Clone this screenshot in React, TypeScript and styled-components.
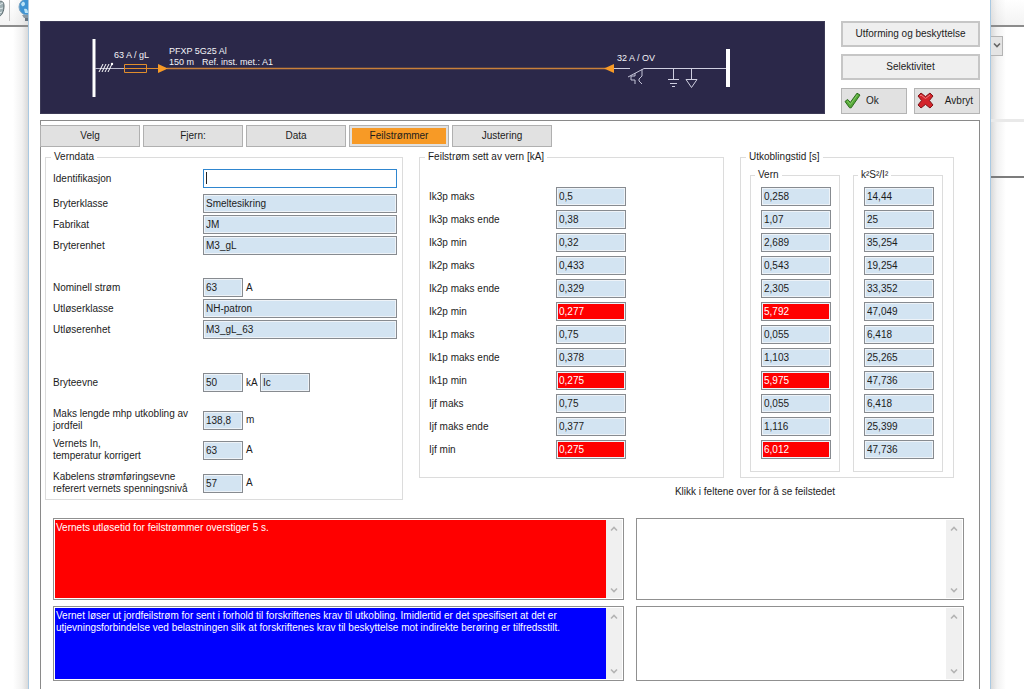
import React, { useId } from "react";
import styled, { createGlobalStyle } from "styled-components";

const GlobalStyle = createGlobalStyle`
  * { box-sizing: border-box; }
  body {
    margin: 0;
    background: #fff;
    color: #1c1c1c;
    font: 10px/12px "Liberation Sans", Arial, sans-serif;
  }
  button, input, textarea { font: inherit; color: inherit; }
`;

/* ---------- window and what shows behind it ---------- */

const Desktop = styled.div`
  display: flex;
  min-height: 100vh;
`;

const Behind = styled.div<{ $side: "left" | "right" }>`
  flex: none;
  width: ${(p) => (p.$side === "left" ? 28 : 33)}px;
  overflow: hidden;
  background: linear-gradient(
    to ${(p) => p.$side},
    #dadada 0,
    #f1f1f1 6px,
    #fff 15px
  );
`;

const BehindToolbar = styled.div`
  display: flex;
  height: 27px;
  border-bottom: 2px solid #8c8c8c;
  background: linear-gradient(rgba(255, 255, 255, 0.3), rgba(225, 225, 225, 0.4));
`;

const BehindCombo = styled.div`
  display: flex;
  height: 92px;
  padding-top: 9px;
`;

const ComboArrow = styled.button`
  width: 12px;
  height: 20px;
  padding: 0;
  border: 1px solid #b4b4b4;
  border-left: 0;
  background: #e4e4e4;
`;

const BehindStrip = styled.div`
  height: 59px;
  border-top: 3px solid #e9e9e9;
  border-bottom: 2px solid #7c7c7c;
`;

const Dialog = styled.main`
  flex: 1;
  min-width: 0;
  display: flex;
  flex-direction: column;
  padding: 21px 10px 0 11px;
  border: solid #a9c9e2;
  border-width: 0 1px;
  background: #fff;
`;

const Header = styled.header`
  display: flex;
  gap: 16px;
`;

const Diagram = styled.div`
  flex: 1;
  min-width: 0;
  height: 93px;
  border: 1px solid #3c3a56;
  background: #2b2849;
  svg { display: block; width: 100%; height: 91px; }
  text { font-size: 9px; fill: #f4f4f8; }
`;

const Actions = styled.div`
  flex: none;
  width: 139px;
  display: grid;
  grid-template-columns: 66px 66px;
  justify-content: space-between;
  row-gap: 7px;
`;

const ActionButton = styled.button<{ $wide?: boolean; $align?: string }>`
  grid-column: ${(p) => (p.$wide ? "1 / -1" : "auto")};
  display: flex;
  align-items: center;
  justify-content: ${(p) => p.$align ?? "center"};
  gap: 5px;
  height: 26px;
  padding: ${(p) => (p.$wide ? "0" : "0 6px 0 2px")};
  border: ${(p) => (p.$wide ? 2 : 1)}px solid ${(p) => (p.$wide ? "#c6c6c6" : "#b4b4b4")};
  background: ${(p) => (p.$wide ? "#efefef" : "#e1e1e1")};
`;

/* ---------- tab page ---------- */

const Page = styled.section`
  flex: 1;
  margin-top: 6px;
  padding-top: 4px;
  border: 1px solid #8a8a8a;
  border-bottom: 0;
`;

const Tabs = styled.nav`
  display: flex;
  gap: 3px;
  margin-left: -1px;
`;

const Tab = styled.button<{ $active?: boolean }>`
  width: 100px;
  height: 22px;
  padding: 0;
  border: 1px solid #b0b0b0;
  background: ${(p) => (p.$active ? "#f79a26" : "#e1e1e1")};
  box-shadow: ${(p) => (p.$active ? "inset 0 0 0 2px #e1e1e1" : "none")};
`;

const Groups = styled.div`
  display: grid;
  grid-template-columns: 358fr 535fr;
  gap: 16px;
  align-items: start;
  padding: 4px 25px 0 4px;
`;

const ResultGroups = styled.div`
  display: grid;
  grid-template-columns: 305fr 214fr;
  gap: 16px;
`;

const Group = styled.fieldset<{ $pad: string }>`
  min-width: 0;
  margin: 0;
  padding: ${(p) => p.$pad};
  border: 1px solid #dcdcdc;
`;

const Legend = styled.legend<{ $indent: number }>`
  height: 12px;
  margin-left: ${(p) => p.$indent}px;
  padding: 0 3px;
  line-height: 12px;
  white-space: nowrap;
`;

const FormRow = styled.div<{ $gap: number; $tall?: boolean }>`
  display: grid;
  grid-template-columns: 150px minmax(0, 1fr);
  align-items: center;
  height: ${(p) => (p.$tall ? 24 : 19)}px;
  margin-top: ${(p) => p.$gap}px;
`;

const Label = styled.label`
  white-space: pre-line;
`;

const FieldLine = styled.div`
  display: flex;
  align-items: center;
`;

const Unit = styled.span`
  width: 17px;
  padding-left: 3px;
`;

const Field = styled.input<{ $w?: number; $alarm?: boolean; $edit?: boolean }>`
  display: block;
  width: ${(p) => (p.$w ? `${p.$w}px` : "100%")};
  height: 19px;
  padding: 0 2px;
  outline: 0;
  border: 1px solid ${(p) => (p.$edit ? "#2f86cf" : "#878b90")};
  background: ${(p) =>
    p.$alarm
      ? "#f00"
      : p.$edit
        ? "linear-gradient(#222, #222) 2px 2px / 1px 12px no-repeat #fff"
        : "#d3e4f2"};
  color: ${(p) => (p.$alarm ? "#fff" : "#1c1c1c")};
  caret-color: transparent;
  box-shadow: ${(p) => (p.$edit ? "none" : "inset 0 0 0 1px #eef3f8")};
`;

const CurrentList = styled.div`
  display: grid;
  grid-template-columns: 127px 70px;
  align-items: center;
  row-gap: 4px;
`;

const TimeGroups = styled.div`
  display: grid;
  grid-template-columns: 1fr 1fr;
  gap: 13px;
`;

const TimeList = styled.div`
  display: grid;
  row-gap: 4px;
`;

const Hint = styled.p`
  margin: 8px 119px 0 0;
  text-align: right;
`;

const Messages = styled.div`
  display: grid;
  grid-template-columns: 571fr 328fr;
  grid-template-rows: 82px 75px;
  gap: 6px 12px;
  padding: 18px 15px 8px 12px;
`;

const MessageFrame = styled.div`
  display: flex;
  padding: 1px;
  border: 1px solid #909090;
`;

const MessageText = styled.textarea<{ $tone?: string }>`
  flex: 1;
  min-width: 0;
  padding: 2px 0 0 1px;
  border: 0;
  outline: 0;
  resize: none;
  overflow: hidden;
  background: ${(p) => p.$tone ?? "#fff"};
  color: #fff;
`;

const ScrollTrack = styled.div`
  flex: none;
  width: 16px;
  display: flex;
  flex-direction: column;
  justify-content: space-between;
  background: #f0f0f0;
`;

const ScrollButton = styled.button`
  height: 17px;
  padding: 0;
  border: 0;
  background: none;
  svg { display: block; margin: 0 auto; }
`;

/* ---------- drawings ---------- */

const Chevron = ({ up, color = "#b4b4b4" }: { up?: boolean; color?: string }) => (
  <svg width="10" height="10" viewBox="0 0 10 10" fill="none" stroke={color} strokeWidth="1.6">
    <path d={up ? "M2 6.5 5 3.5 8 6.5" : "M2 3.5 5 6.5 8 3.5"} />
  </svg>
);

const CheckIcon = () => (
  <svg width="17" height="17" viewBox="0 0 17 17">
    <path
      d="M1 9.5 3.6 7.4 6.3 10.4 13 1.2 16 3 7.2 15.8 5.6 15.8Z"
      fill="#55a838"
      stroke="#2c6b1d"
      strokeWidth="1"
      strokeLinejoin="round"
    />
    <path d="M3.4 9 6.4 12.4 13.4 2.8" fill="none" stroke="#86cc66" strokeWidth="1" />
  </svg>
);

const CrossIcon = () => (
  <svg width="17" height="17" viewBox="0 0 17 17">
    <path
      d="M4 1 8.5 4.6 13 1 16 4 12.4 8.5 16 13 13 16 8.5 12.4 4 16 1 13 4.6 8.5 1 4Z"
      fill="#d3242b"
      stroke="#7d1519"
      strokeWidth="1"
      strokeLinejoin="round"
    />
    <path d="M3 4 4 3 8.5 6.5 13 3" fill="none" stroke="#ec7a7d" strokeWidth="1" />
  </svg>
);

const ToolbarIcons = () => (
  <svg width="28" height="25" viewBox="0 0 28 25">
    <path d="M-2 2C2 0 4 2 4 6 4 11 2 16-2 17Z" fill="#9fb0b4" stroke="#56666a" />
    <path d="M-1 5 3 3M-1 9 3 8M-1 13 2 12" stroke="#dfe8ea" />
    <path d="M9.5 0V21" stroke="#c4c4c4" />
    <circle cx="27" cy="7" r="8" fill="#3e93d2" stroke="#7da7c6" />
    <path d="M21 4C23 0 25 2 25 4S22 8 21 4M24 9C27 8 28 10 28 13L25 13Z" fill="#b9e2f6" />
    <path d="M22 15H28V18H24Z" fill="#8a98a2" />
    <path d="M25 18H28V21H25Z" fill="#667480" />
  </svg>
);

const CircuitDrawing = () => (
  <svg viewBox="41 22 783 91" preserveAspectRatio="xMinYMid meet" fill="none" role="img" aria-label="Kursdiagram">
    <path d="M94 39V97" stroke="#fff" strokeWidth="3" />
    <path d="M95 68.500H124" stroke="#b9b9cc" />
    <path d="M99 72 103 64M102 72 106 64M105 72 109 64M108 72 112 64" stroke="#fff" />
    <circle cx="112" cy="64" r="1.200" fill="#fff" />
    <path d="M124.500 64.500H146.500V72.500H124.500ZM124 68.500H158" stroke="#e08d2c" />
    <path d="M167 68.500H606" stroke="#c9803a" strokeWidth="1.500" />
    <path d="M158 64V73L168 68.500Z" fill="#f79a26" />
    <path d="M614 64V73L604 68.500Z" fill="#f79a26" />
    <path d="M614 68.500H630M644 68.500H727" stroke="#cfcfe0" />
    <path
      d="M644 68.500 628 77M635 73V76H631V80H635V84M642 69V76L639 79V81L642 84"
      stroke="#c4c4d8"
    />
    <path d="M673.500 68V79M668 79.500H679M670 83.500H677M672 86.500H675" stroke="#cfcfe0" />
    <path d="M691.500 68V79M686 79.500H697L691.500 87.500Z" stroke="#cfcfe0" />
    <path d="M728 49V87" stroke="#fff" strokeWidth="4" />
    <text x="114" y="58">63 A / gL</text>
    <text x="169" y="54">PFXP 5G25 Al</text>
    <text x="169" y="65">150 m</text>
    <text x="202" y="65">Ref. inst. met.: A1</text>
    <text x="617" y="61">32 A / OV</text>
  </svg>
);

/* ---------- data ---------- */

type FormItem = {
  label: string;
  value: string;
  gap: number;
  unit?: string;
  extra?: string;
  tall?: boolean;
  edit?: boolean;
};

const formItems: FormItem[] = [
  { label: "Identifikasjon", value: "", gap: 0, edit: true },
  { label: "Bryterklasse", value: "Smeltesikring", gap: 6 },
  { label: "Fabrikat", value: "JM", gap: 2 },
  { label: "Bryterenhet", value: "M3_gL", gap: 2 },
  { label: "Nominell strøm", value: "63", unit: "A", gap: 23 },
  { label: "Utløserklasse", value: "NH-patron", gap: 2 },
  { label: "Utløserenhet", value: "M3_gL_63", gap: 2 },
  { label: "Bryteevne", value: "50", unit: "kA", extra: "Ic", gap: 34 },
  { label: "Maks lengde mhp utkobling av\njordfeil", value: "138,8", unit: "m", gap: 16, tall: true },
  { label: "Vernets In,\ntemperatur korrigert", value: "63", unit: "A", gap: 6, tall: true },
  { label: "Kabelens strømføringsevne\nreferert vernets spenningsnivå", value: "57", unit: "A", gap: 9, tall: true },
];

const results = [
  { name: "Ik3p maks", current: "0,5", time: "0,258", k: "14,44" },
  { name: "Ik3p maks ende", current: "0,38", time: "1,07", k: "25" },
  { name: "Ik3p min", current: "0,32", time: "2,689", k: "35,254" },
  { name: "Ik2p maks", current: "0,433", time: "0,543", k: "19,254" },
  { name: "Ik2p maks ende", current: "0,329", time: "2,305", k: "33,352" },
  { name: "Ik2p min", current: "0,277", time: "5,792", k: "47,049", alarm: true },
  { name: "Ik1p maks", current: "0,75", time: "0,055", k: "6,418" },
  { name: "Ik1p maks ende", current: "0,378", time: "1,103", k: "25,265" },
  { name: "Ik1p min", current: "0,275", time: "5,975", k: "47,736", alarm: true },
  { name: "Ijf maks", current: "0,75", time: "0,055", k: "6,418" },
  { name: "Ijf maks ende", current: "0,377", time: "1,116", k: "25,399" },
  { name: "Ijf min", current: "0,275", time: "6,012", k: "47,736", alarm: true },
];

const messages = [
  { name: "Feil", tone: "#f00", text: "Vernets utløsetid for feilstrømmer overstiger 5 s." },
  { name: "Feil, merknad", text: "" },
  {
    name: "Informasjon",
    tone: "#00f",
    text:
      "Vernet løser ut jordfeilstrøm for sent i forhold til forskriftenes krav til utkobling. Imidlertid er det spesifisert at det er utjevningsforbindelse ved belastningen slik at forskriftenes krav til beskyttelse mot indirekte berøring er tilfredsstilt.",
  },
  { name: "Informasjon, merknad", text: "" },
];

/* ---------- parts ---------- */

const FormField = ({ item }: { item: FormItem }) => {
  const id = useId();
  return (
    <FormRow $gap={item.gap} $tall={item.tall}>
      <Label htmlFor={id}>{item.label}</Label>
      <FieldLine>
        <Field
          id={id}
          defaultValue={item.value}
          readOnly={!item.edit}
          $edit={item.edit}
          $w={item.unit ? 40 : undefined}
        />
        {item.unit && <Unit>{item.unit}</Unit>}
        {item.extra && <Field aria-label="Type bryteevne" readOnly defaultValue={item.extra} $w={50} />}
      </FieldLine>
    </FormRow>
  );
};

const Message = ({ name, text, tone }: { name: string; text: string; tone?: string }) => (
  <MessageFrame>
    <MessageText aria-label={name} readOnly defaultValue={text} $tone={tone} />
    <ScrollTrack>
      <ScrollButton aria-label="Rull opp"><Chevron up /></ScrollButton>
      <ScrollButton aria-label="Rull ned"><Chevron /></ScrollButton>
    </ScrollTrack>
  </MessageFrame>
);

export default function App() {
  return (
    <>
      <GlobalStyle />
      <Desktop>
        <Behind $side="left">
          <BehindToolbar><ToolbarIcons /></BehindToolbar>
        </Behind>

        <Dialog>
          <Header>
            <Diagram><CircuitDrawing /></Diagram>
            <Actions>
              <ActionButton $wide>Utforming og beskyttelse</ActionButton>
              <ActionButton $wide>Selektivitet</ActionButton>
              <ActionButton $align="flex-start"><CheckIcon />Ok</ActionButton>
              <ActionButton $align="space-between"><CrossIcon />Avbryt</ActionButton>
            </Actions>
          </Header>

          <Page>
            <Tabs>
              <Tab>Velg</Tab>
              <Tab>Fjern:</Tab>
              <Tab>Data</Tab>
              <Tab $active>Feilstrømmer</Tab>
              <Tab>Justering</Tab>
            </Tabs>

            <Groups>
              <Group $pad="6px 5px 4px 7px">
                <Legend $indent={-2}>Verndata</Legend>
                {formItems.map((item) => <FormField key={item.label} item={item} />)}
              </Group>

              <div>
                <ResultGroups>
                  <Group $pad="24px 9px 18px 9px">
                    <Legend $indent={-4}>Feilstrøm sett av vern [kA]</Legend>
                    <CurrentList>
                      {results.map((r) => (
                        <React.Fragment key={r.name}>
                          <Label htmlFor={`current-${r.name}`}>{r.name}</Label>
                          <Field id={`current-${r.name}`} readOnly defaultValue={r.current} $alarm={r.alarm} />
                        </React.Fragment>
                      ))}
                    </CurrentList>
                  </Group>

                  <Group $pad="6px 10px 5px 9px">
                    <Legend $indent={-4}>Utkoblingstid [s]</Legend>
                    <TimeGroups>
                      <Group $pad="6px 8px 12px 10px">
                        <Legend $indent={-6}>Vern</Legend>
                        <TimeList>
                          {results.map((r) => (
                            <Field key={r.name} aria-label={`Vern ${r.name}`} readOnly defaultValue={r.time} $alarm={r.alarm} />
                          ))}
                        </TimeList>
                      </Group>
                      <Group $pad="6px 8px 12px 10px">
                        <Legend $indent={-6}>k²S²/I²</Legend>
                        <TimeList>
                          {results.map((r) => (
                            <Field key={r.name} aria-label={`k²S²/I² ${r.name}`} readOnly defaultValue={r.k} />
                          ))}
                        </TimeList>
                      </Group>
                    </TimeGroups>
                  </Group>
                </ResultGroups>
                <Hint>Klikk i feltene over for å se feilstedet</Hint>
              </div>
            </Groups>

            <Messages>
              {messages.map((m) => <Message key={m.name} {...m} />)}
            </Messages>
          </Page>
        </Dialog>

        <Behind $side="right">
          <BehindToolbar />
          <BehindCombo>
            <ComboArrow aria-label="Åpne liste"><Chevron color="#666" /></ComboArrow>
          </BehindCombo>
          <BehindStrip />
        </Behind>
      </Desktop>
    </>
  );
}
